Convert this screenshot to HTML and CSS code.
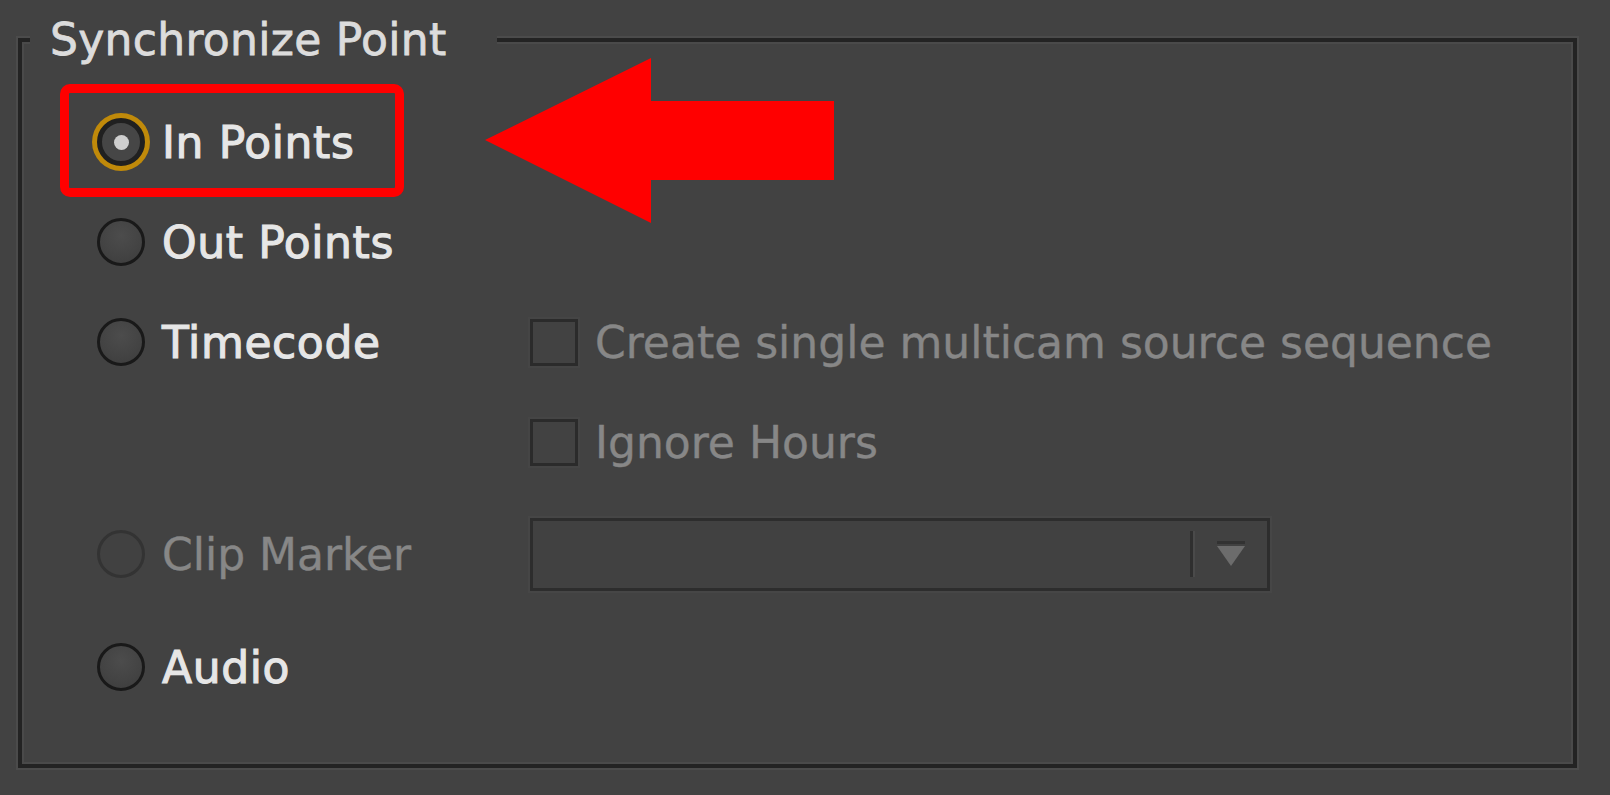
FILE: index.html
```html
<!DOCTYPE html>
<html lang="en">
<head>
<meta charset="utf-8">
<title>Synchronize Point</title>
<link rel="stylesheet" href="styles.css">
</head>
<body>
<div class="group">
  <div class="legend">Synchronize Point</div>
  <div class="rows">
    <div class="row">
      <label class="opt"><span class="radio checked"><span class="dot"></span></span><span class="label">In Points</span></label>
    </div>
    <div class="row">
      <label class="opt"><span class="radio"></span><span class="label">Out Points</span></label>
    </div>
    <div class="row">
      <label class="opt"><span class="radio"></span><span class="label">Timecode</span></label>
      <label class="opt"><span class="check"></span><span class="label off">Create single multicam source sequence</span></label>
    </div>
    <div class="row">
      <span></span>
      <label class="opt"><span class="check"></span><span class="label off">Ignore Hours</span></label>
    </div>
    <div class="row spaced">
      <label class="opt"><span class="radio disabled"></span><span class="label off">Clip Marker</span></label>
      <div class="select">
        <span class="select-field"></span>
        <span class="select-div"></span>
        <span class="select-btn">
          <svg width="30" height="27" viewBox="0 0 30 27"><rect x="1" y="0" width="28" height="3" fill="#323232"/><polygon points="1,5 29,5 15,25" fill="#6c6c6c"/></svg>
        </span>
      </div>
    </div>
    <div class="row spaced2">
      <label class="opt"><span class="radio"></span><span class="label">Audio</span></label>
    </div>
  </div>
</div>
<div class="highlight"></div>
<svg class="arrow" width="349" height="165" viewBox="0 0 349 165"><polygon points="0,82 166,0 166,43 349,43 349,122 166,122 166,165" fill="#ff0000"/></svg>
</body>
</html>
```
FILE: styles.css
```css
html, body {
  margin: 0;
  padding: 0;
}
body {
  width: 1610px;
  height: 795px;
  overflow: hidden;
  background: #424242;
  font-family: "DejaVu Sans", "Liberation Sans", sans-serif;
  font-size: 44px;
  position: relative;
}
.group {
  position: relative;
  box-sizing: border-box;
  margin: 38px 33px 0 18px;
  height: 730px;
  border: 4px solid #232323;
  box-shadow: inset 0 0 0 2px #4a4a4a, 0 0 0 2px #4b4b4b;
}
.legend {
  position: absolute;
  top: -28px;
  left: 8px;
  line-height: 51px;
  padding: 0 50px 0 20px;
  background: #424242;
  color: #dcdcdc;
  letter-spacing: 0.3px;
  -webkit-text-stroke: 0.8px #dcdcdc;
}
.rows {
  padding: 50px 0 0 75px;
  display: flex;
  flex-direction: column;
}
.row {
  display: grid;
  grid-template-columns: 433px 1fr;
  align-items: center;
  height: 100px;
}
.row.spaced { margin-top: 12px; }
.row.spaced2 { margin-top: 13px; }
.opt {
  display: flex;
  align-items: center;
  gap: 17px;
}
.label {
  color: #e6e6e6;
  line-height: 51px;
  white-space: nowrap;
  letter-spacing: 0.6px;
  -webkit-text-stroke: 1.1px #e6e6e6;
}
.label.off {
  color: #878787;
  letter-spacing: 0;
  -webkit-text-stroke: 0.4px #878787;
}
.radio {
  box-sizing: border-box;
  width: 48px;
  height: 48px;
  flex: none;
  border-radius: 50%;
  border: 3px solid #191919;
  background: radial-gradient(circle at 50% 35%, #4c4c4c 0%, #434343 60%, #3c3c3c 100%);
  display: flex;
  align-items: center;
  justify-content: center;
}
.radio.disabled {
  border-color: #333;
  background: #414141;
}
.radio.checked {
  border: 5px solid #202020;
  box-shadow: 0 0 0 5px #c08a0a;
  background: #464646;
}
.dot {
  width: 15px;
  height: 15px;
  border-radius: 50%;
  background: #cfcfcf;
}
.check {
  box-sizing: border-box;
  width: 48px;
  height: 47px;
  flex: none;
  border: 3px solid #2b2b2b;
  background: #424242;
  box-shadow: 0 0 0 2px #454545;
}
.select {
  box-sizing: border-box;
  width: 740px;
  height: 73px;
  border: 3px solid #2d2d2d;
  background: #414141;
  box-shadow: 0 0 0 2px #464646;
  display: flex;
  align-items: center;
}
.select-field {
  flex: 1;
}
.select-div {
  width: 3px;
  height: 46px;
  background: #2f2f2f;
  border-right: 2px solid #4a4a4a;
}
.select-btn {
  width: 72px;
  display: flex;
  justify-content: center;
  align-items: center;
}
.select-btn svg {
  display: block;
}
.highlight {
  position: absolute;
  left: 60px;
  top: 84px;
  width: 344px;
  height: 113px;
  box-sizing: border-box;
  border: 9.5px solid #ff0000;
  border-radius: 10px;
}
.arrow {
  position: absolute;
  left: 485px;
  top: 58px;
  display: block;
}
```
